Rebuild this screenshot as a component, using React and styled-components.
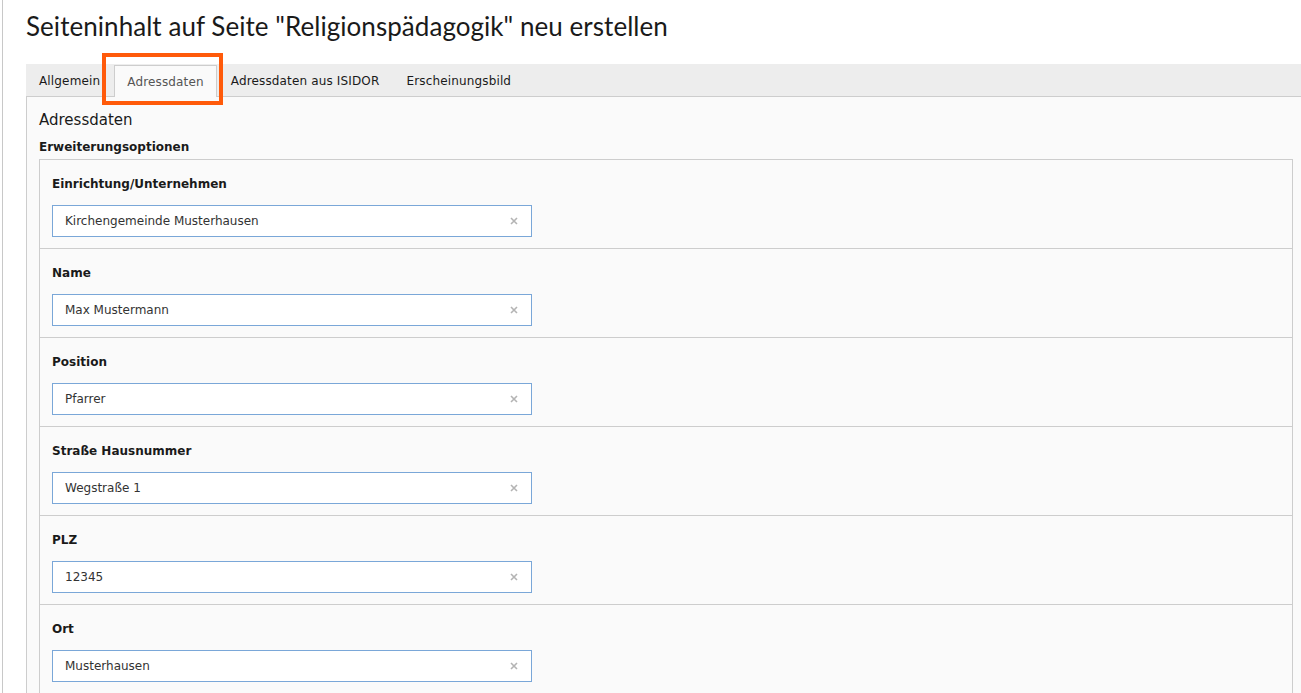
import React from "react";
import styled, { createGlobalStyle } from "styled-components";

const GlobalStyle = createGlobalStyle`
  html, body {
    margin: 0;
    padding: 0;
    background: #fff;
    overflow: hidden;
  }
  body {
    font-family: "DejaVu Sans", Verdana, sans-serif;
    color: #1a1a1a;
  }
`;

const Page = styled.div`
  height: 693px;
  margin-left: 2px;
  border-left: 1px solid #c8c8c8;
  padding-left: 23px;
  width: 1300px;
  box-sizing: border-box;
`;

const Title = styled.h1`
  margin: 0;
  padding-top: 9px;
  height: 64px;
  box-sizing: border-box;
  font-family: "Lato", "Noto Sans", sans-serif;
  font-weight: 400;
  font-size: 26px;
  letter-spacing: 0.05px;
  line-height: 34px;
  color: #1a1a1a;
`;

const Panel = styled.div`
  width: 1279px;
`;

const TabBar = styled.div`
  position: relative;
  display: flex;
  align-items: flex-end;
  height: 32px;
  background: #ededed;
  border-bottom: 1px solid #cdcdcd;
`;

const Tab = styled.div`
  height: ${(p) => (p.active ? "32px" : "31px")};
  margin-bottom: ${(p) => (p.active ? "-1px" : "0")};
  padding: 0 12px;
  margin-right: 1px;
  display: flex;
  align-items: center;
  font-size: 12px;
  letter-spacing: 0.15px;
  color: ${(p) => (p.active ? "#555" : "#1a1a1a")};
  background: ${(p) => (p.active ? "#fafafa" : "transparent")};
  border: 1px solid ${(p) => (p.active ? "#cdcdcd" : "transparent")};
  border-bottom: none;
  box-sizing: border-box;
  white-space: nowrap;
`;

const Highlight = styled.div`
  position: absolute;
  left: 76px;
  top: -11px;
  width: 121px;
  height: 52px;
  border: 4px solid #ff5a0a;
  box-sizing: border-box;
  pointer-events: none;
`;

const Content = styled.div`
  background: #fafafa;
  border-left: 1px solid #cdcdcd;
  padding: 13px 12px 0 12px;
`;

const SectionTitle = styled.h2`
  margin: 0;
  font-weight: 400;
  font-size: 15px;
  line-height: 20px;
  color: #1a1a1a;
`;

const GroupTitle = styled.div`
  margin-top: 9px;
  font-weight: 700;
  font-size: 12px;
  line-height: 16px;
  height: 20px;
`;

const FieldBox = styled.div`
  border: 1px solid #cdcdcd;
  border-bottom: none;
`;

const Row = styled.div`
  padding: 16px 12px 11px;
  border-bottom: 1px solid #cdcdcd;
`;

const Label = styled.label`
  display: block;
  font-weight: 700;
  font-size: 12px;
  line-height: 16px;
`;

const InputWrap = styled.div`
  position: relative;
  margin-top: 13px;
  width: 480px;
  height: 32px;
  box-sizing: border-box;
  background: #fff;
  border: 1px solid #7aa7d8;
  display: flex;
  align-items: center;
`;

const Input = styled.input`
  flex: 1;
  border: none;
  outline: none;
  background: transparent;
  padding: 0 30px 0 12px;
  font-family: "DejaVu Sans", Verdana, sans-serif;
  font-size: 12px;
  color: #333;
  height: 100%;
`;

const Clear = styled.span`
  position: absolute;
  right: 13px;
  top: 11px;
  display: flex;
  width: 8px;
  height: 8px;
`;

const fields = [
  ["Einrichtung/Unternehmen", "Kirchengemeinde Musterhausen"],
  ["Name", "Max Mustermann"],
  ["Position", "Pfarrer"],
  ["Straße Hausnummer", "Wegstraße 1"],
  ["PLZ", "12345"],
  ["Ort", "Musterhausen"],
];

const tabs = ["Allgemein", "Adressdaten", "Adressdaten aus ISIDOR", "Erscheinungsbild"];

function ClearIcon() {
  return (
    <Clear>
      <svg width="8" height="8" viewBox="0 0 8 8">
        <path d="M1 1L7 7M7 1L1 7" stroke="#b4b4b4" strokeWidth="1.6" />
      </svg>
    </Clear>
  );
}

export default function App() {
  return (
    <Page>
      <GlobalStyle />
      <Title>Seiteninhalt auf Seite "Religionspädagogik" neu erstellen</Title>
      <Panel>
        <TabBar>
          {tabs.map((t, i) => (
            <Tab key={t} active={i === 1}>
              {t}
            </Tab>
          ))}
          <Highlight />
        </TabBar>
        <Content>
          <SectionTitle>Adressdaten</SectionTitle>
          <GroupTitle>Erweiterungsoptionen</GroupTitle>
          <FieldBox>
            {fields.map(([label, value]) => (
              <Row key={label}>
                <Label>{label}</Label>
                <InputWrap>
                  <Input defaultValue={value} />
                  <ClearIcon />
                </InputWrap>
              </Row>
            ))}
          </FieldBox>
        </Content>
      </Panel>
    </Page>
  );
}
